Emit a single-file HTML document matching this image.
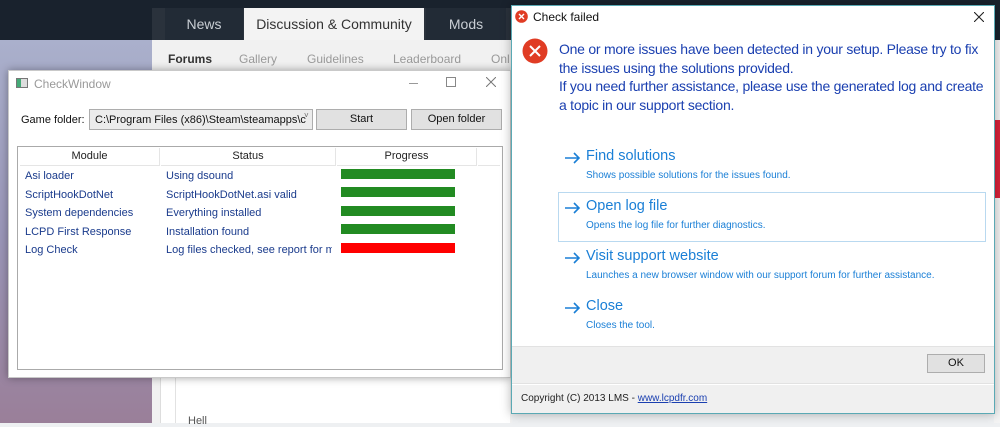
<!DOCTYPE html>
<html><head><meta charset="utf-8"><style>
*{margin:0;padding:0;box-sizing:border-box}
body{width:1000px;height:423px;overflow:hidden;position:relative;font-family:"Liberation Sans","DejaVu Sans",sans-serif;background:#eef0f2}
.abs{position:absolute}
.f11{font-size:11px}
.lt{position:absolute;left:21px;font-size:14.5px;white-space:nowrap}
.ld{position:absolute;left:21px;font-size:10px;white-space:nowrap}
.ar{position:absolute;left:0}
</style></head><body>
<div class="abs" style="left:0;top:0;width:1000px;height:40px;background:#19222d"></div>
<div class="abs" style="left:0;top:40px;width:152px;height:383px;background:linear-gradient(180deg,#aab0cc 0%,#9a96b8 50%,#9a7f99 100%)"></div>
<div class="abs" style="left:152px;top:8px;width:360px;height:32px;background:#2a323c"></div>
<div class="abs" style="left:165px;top:8px;width:78px;height:32px;background:#222b36;color:#c9ced4;font-size:14px;text-align:center;line-height:32px">News</div>
<div class="abs" style="left:244px;top:8px;width:180px;height:32px;background:#f3f3f3;color:#333;font-size:14px;text-align:center;line-height:32px">Discussion &amp; Community</div>
<div class="abs" style="left:426px;top:8px;width:80px;height:32px;background:#222b36;color:#c9ced4;font-size:14px;text-align:center;line-height:32px">Mods</div>
<div class="abs" style="left:152px;top:40px;width:360px;height:383px;background:#f1f1f1"></div>
<div class="abs" style="left:152px;top:40px;width:360px;height:30px;font-size:12px;color:#999">
<span class="abs" style="left:16px;top:12px;color:#333;font-weight:bold">Forums</span>
<span class="abs" style="left:87px;top:12px">Gallery</span>
<span class="abs" style="left:155px;top:12px">Guidelines</span>
<span class="abs" style="left:241px;top:12px">Leaderboard</span>
<span class="abs" style="left:339px;top:12px">Onl</span></div>
<div class="abs" style="left:160px;top:370px;width:350px;height:53px;background:#fff;border-left:1px solid #ddd"></div>
<div class="abs" style="left:175px;top:370px;width:335px;height:53px;background:#fff;border-left:1px solid #e2e2e2"></div>
<div class="abs" style="left:188px;top:415px;font-size:11px;color:#555">Hell</div>
<div class="abs" style="left:994px;top:40px;width:6px;height:383px;background:#f4f4f4"></div>
<div class="abs" style="left:994px;top:120px;width:6px;height:78px;background:#d9223a"></div>

<div class="abs" style="left:8px;top:70px;width:503px;height:308px;background:#fff;border:1px solid #c9c9c9;box-shadow:0 0 8px rgba(0,0,0,.35)">
 <div class="abs" style="left:7px;top:7px;width:12px;height:10px;border:1px solid #777;background:linear-gradient(90deg,#4a7 0 40%,#ddd 40%)"></div>
 <div class="abs f11" style="left:25px;top:6px;color:#999;font-size:12px">CheckWindow</div>
 <div class="abs" style="left:400px;top:12px;width:9px;height:1px;background:#999"></div>
 <div class="abs" style="left:437px;top:6px;width:10px;height:10px;border:1px solid #888"></div>
 <svg class="abs" style="left:477px;top:6px" width="10" height="10"><path d="M0 0L10 10M10 0L0 10" stroke="#777" stroke-width="1"/></svg>
 <div class="abs f11" style="left:12px;top:43px;color:#111">Game folder:</div>
 <div class="abs f11" style="left:80px;top:38px;width:224px;height:21px;border:1px solid #adadad;background:#ececec;padding:4px 5px;color:#111;white-space:nowrap;overflow:hidden">C:\Program Files (x86)\Steam\steamapps\c</div>
 <div class="abs" style="left:295px;top:40px;font-size:8px;color:#666">˅</div>
 <div class="abs f11" style="left:307px;top:38px;width:91px;height:21px;border:1px solid #adadad;background:#e1e1e1;text-align:center;line-height:19px;color:#111">Start</div>
 <div class="abs f11" style="left:402px;top:38px;width:91px;height:21px;border:1px solid #adadad;background:#e1e1e1;text-align:center;line-height:19px;color:#111">Open folder</div>
 <div class="abs" style="left:8px;top:75px;width:486px;height:224px;border:1px solid #aaa;background:#fff">
  <div class="abs f11" style="left:2px;top:1px;width:140px;height:18px;border-right:1px solid #e5e5e5;border-bottom:1px solid #e5e5e5;text-align:center;line-height:17px;color:#222">Module</div>
  <div class="abs f11" style="left:143px;top:1px;width:175px;height:18px;border-right:1px solid #e5e5e5;border-bottom:1px solid #e5e5e5;text-align:center;line-height:17px;color:#222">Status</div>
  <div class="abs f11" style="left:319px;top:1px;width:140px;height:18px;border-right:1px solid #e5e5e5;border-bottom:1px solid #e5e5e5;text-align:center;line-height:17px;color:#222">Progress</div>
  <div class="abs" style="left:460px;top:1px;width:22px;height:18px;border-bottom:1px solid #e5e5e5"></div>
 </div>
</div>
<div class="abs f11" style="left:25px;top:167px;color:#1a3b8c;line-height:18.5px">Asi loader<br>ScriptHookDotNet<br>System dependencies<br>LCPD First Response<br>Log Check</div>
<div class="abs f11" style="left:166px;top:167px;color:#1a3b8c;line-height:18.5px;white-space:nowrap;width:166px;overflow:hidden">Using dsound<br>ScriptHookDotNet.asi valid<br>Everything installed<br>Installation found<br>Log files checked, see report for mo</div>
<div class="abs" style="left:341px;top:169px;width:114px;height:10px;background:#228b22"></div>
<div class="abs" style="left:341px;top:187px;width:114px;height:10px;background:#228b22"></div>
<div class="abs" style="left:341px;top:206px;width:114px;height:10px;background:#228b22"></div>
<div class="abs" style="left:341px;top:224px;width:114px;height:10px;background:#228b22"></div>
<div class="abs" style="left:341px;top:243px;width:114px;height:10px;background:#ff0000"></div>

<div class="abs" style="left:511px;top:5px;width:484px;height:409px;background:#fff;border:1px solid #5aa9b4;box-shadow:0 0 10px rgba(0,0,0,.3)">
 <svg class="abs" style="left:3px;top:4px" width="13" height="13" viewBox="0 0 13 13"><circle cx="6.5" cy="6.5" r="6.3" fill="#e03c24"/><path d="M4 4L9 9M9 4L4 9" stroke="#fff" stroke-width="1.4"/></svg>
 <div class="abs" style="left:21px;top:4px;font-size:12px;color:#111">Check failed</div>
 <svg class="abs" style="left:462px;top:6px" width="10" height="10"><path d="M0 0L10 10M10 0L0 10" stroke="#222" stroke-width="1.1"/></svg>
 <svg class="abs" style="left:10px;top:32px" width="26" height="26" viewBox="0 0 26 26"><circle cx="13" cy="13" r="12.5" fill="#e03c24"/><path d="M8 8L18 18M18 8L8 18" stroke="#fff" stroke-width="2"/></svg>
 <div class="abs" style="left:47px;top:34px;font-size:14px;letter-spacing:-0.25px;line-height:18.5px;color:#1a3fb0;white-space:nowrap">One or more issues have been detected in your setup. Please try to fix<br>the issues using the solutions provided.<br>If you need further assistance, please use the generated log and create<br>a topic in our support section.</div>
 <div class="abs" style="left:46px;top:186px;width:428px;height:50px;border:1px solid #b9d9f0"></div>
 <div class="abs" style="left:53px;top:141px;color:#1a7fd6">
  <svg class="ar" style="top:5px" width="16" height="12"><path d="M0 6H14M9 1L14 6L9 11" stroke="#1a7fd6" stroke-width="1.6" fill="none"/></svg>
  <div class="lt" style="top:1px">Find solutions</div>
  <div class="ld" style="top:23px">Shows possible solutions for the issues found.</div>
  <svg class="ar" style="top:55px" width="16" height="12"><path d="M0 6H14M9 1L14 6L9 11" stroke="#1a7fd6" stroke-width="1.6" fill="none"/></svg>
  <div class="lt" style="top:51px">Open log file</div>
  <div class="ld" style="top:73px">Opens the log file for further diagnostics.</div>
  <svg class="ar" style="top:105px" width="16" height="12"><path d="M0 6H14M9 1L14 6L9 11" stroke="#1a7fd6" stroke-width="1.6" fill="none"/></svg>
  <div class="lt" style="top:101px">Visit support website</div>
  <div class="ld" style="top:123px">Launches a new browser window with our support forum for further assistance.</div>
  <svg class="ar" style="top:155px" width="16" height="12"><path d="M0 6H14M9 1L14 6L9 11" stroke="#1a7fd6" stroke-width="1.6" fill="none"/></svg>
  <div class="lt" style="top:151px">Close</div>
  <div class="ld" style="top:173px">Closes the tool.</div>
 </div>
 <div class="abs" style="left:0;top:340px;width:482px;height:38px;background:#f0f0f0;border-top:1px solid #e2e2e2;border-bottom:1px solid #e2e2e2"></div>
 <div class="abs f11" style="left:415px;top:348px;width:58px;height:19px;border:1px solid #adadad;background:#e1e1e1;text-align:center;line-height:17px;color:#111">OK</div>
 <div class="abs" style="left:0;top:379px;width:482px;height:28px;background:#f0f0f0"></div>
 <div class="abs" style="left:9px;top:387px;font-size:10px;color:#222">Copyright (C) 2013 LMS - <span style="color:#1a3fb0;text-decoration:underline">www.lcpdfr.com</span></div>
</div>
</body></html>
